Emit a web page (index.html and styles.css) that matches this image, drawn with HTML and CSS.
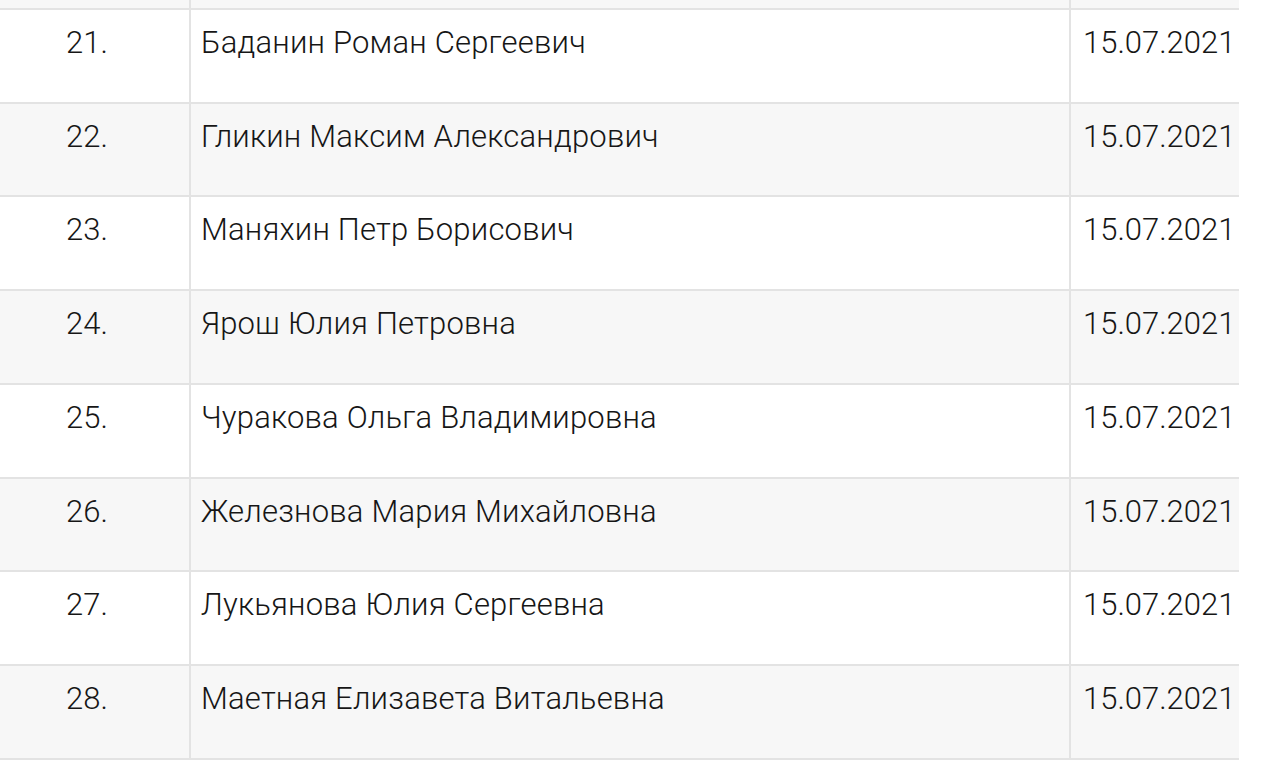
FILE: index.html
```html
<!DOCTYPE html>
<html lang="ru">
<head>
<meta charset="utf-8">
<title>Список</title>
<link rel="stylesheet" href="styles.css">
</head>
<body>
<div class="viewport">
  <div class="table">
    <div class="row alt"><div class="cell num"></div><div class="cell name"></div><div class="cell date"></div></div>
    <div class="row"><div class="cell num">21.</div><div class="cell name">Баданин Роман Сергеевич</div><div class="cell date">15.07.2021</div></div>
    <div class="row alt"><div class="cell num">22.</div><div class="cell name">Гликин Максим Александрович</div><div class="cell date">15.07.2021</div></div>
    <div class="row"><div class="cell num">23.</div><div class="cell name">Маняхин Петр Борисович</div><div class="cell date">15.07.2021</div></div>
    <div class="row alt"><div class="cell num">24.</div><div class="cell name">Ярош Юлия Петровна</div><div class="cell date">15.07.2021</div></div>
    <div class="row"><div class="cell num">25.</div><div class="cell name">Чуракова Ольга Владимировна</div><div class="cell date">15.07.2021</div></div>
    <div class="row alt"><div class="cell num">26.</div><div class="cell name">Железнова Мария Михайловна</div><div class="cell date">15.07.2021</div></div>
    <div class="row"><div class="cell num">27.</div><div class="cell name">Лукьянова Юлия Сергеевна</div><div class="cell date">15.07.2021</div></div>
    <div class="row alt"><div class="cell num">28.</div><div class="cell name">Маетная Елизавета Витальевна</div><div class="cell date">15.07.2021</div></div>
  </div>
</div>
</body>
</html>
```
FILE: styles.css
```css
html, body {
  margin: 0;
  padding: 0;
  background: #ffffff;
}
.viewport {
  width: 1280px;
  height: 764px;
  overflow: hidden;
}
.table {
  width: 1239px;
  margin-top: -84px;
  font-family: Roboto, "Noto Sans", sans-serif;
  font-size: 31px;
  font-weight: 350;
  color: #161616;
}
.row {
  display: grid;
  grid-template-columns: 191px 880px 168px;
  height: 93.75px;
  background: #ffffff;
}
.row.alt {
  background: #f7f7f7;
}
.cell {
  box-sizing: border-box;
  border-bottom: 2px solid #e3e3e3;
  padding-top: 14px;
  line-height: normal;
  white-space: nowrap;
}
.num {
  border-right: 2px solid #e3e3e3;
  padding-left: 66px;
}
.name {
  border-right: 2px solid #e3e3e3;
  padding-left: 10px;
  letter-spacing: 0.2px;
}
.date {
  padding-left: 12px;
}
```
